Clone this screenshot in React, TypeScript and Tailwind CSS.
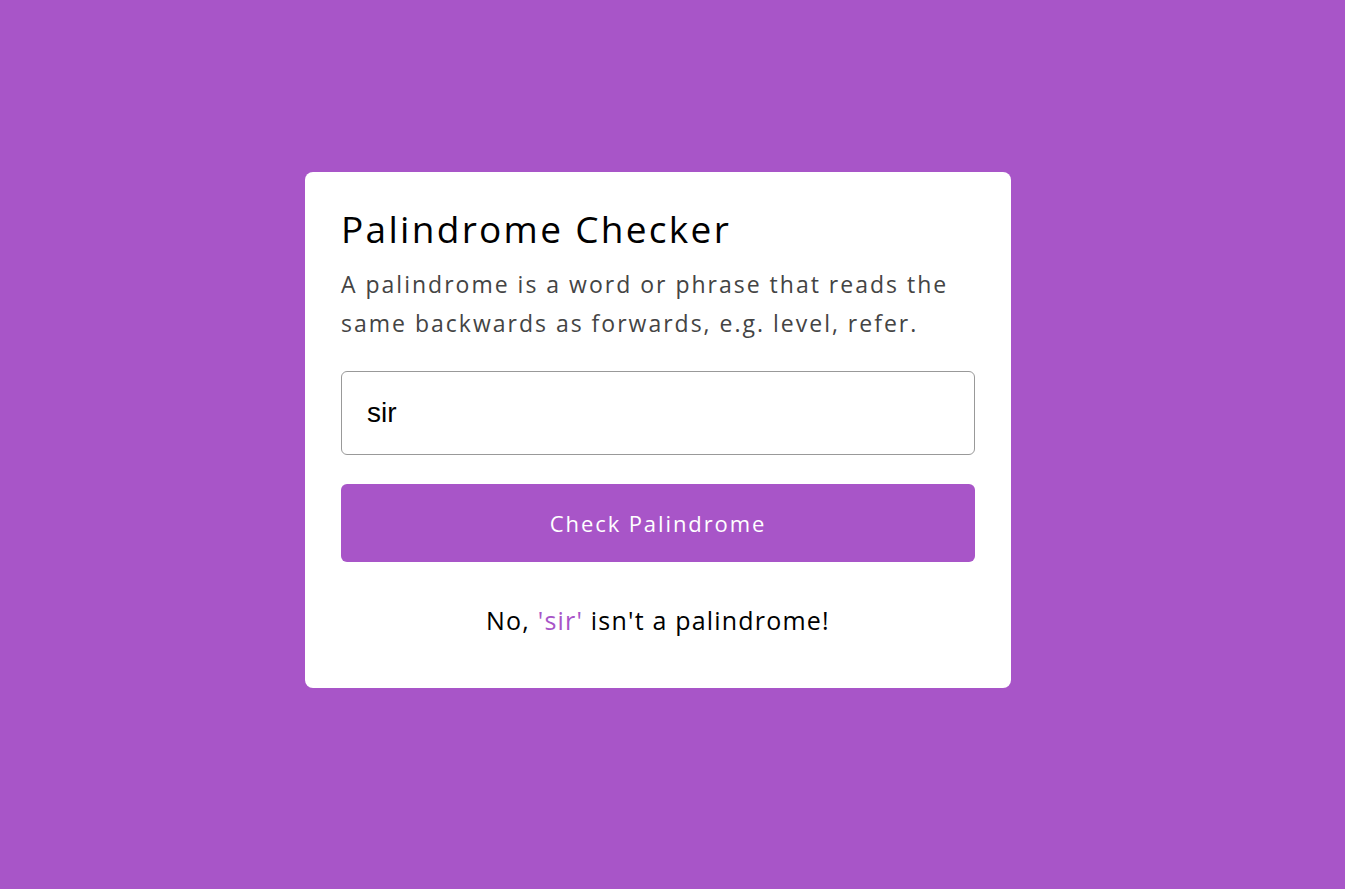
export default function App() {
  return (
    <div className="min-h-screen w-full bg-[#a855c8] pt-[172px] pl-[305px]" style={{ fontFamily: '"Open Sans", sans-serif' }}>
      <div className="w-[706px] rounded-lg bg-white px-9 pt-[30px] pb-[50px]">
        <h1 className="text-[37px] leading-[54px] tracking-[2.3px] text-black">Palindrome Checker</h1>
        <p className="mt-[9px] text-[23px] leading-[39px] tracking-[2px] text-[#444]">
          A palindrome is a word or phrase that reads the same backwards as forwards, e.g. level, refer.
        </p>
        <input
          defaultValue="sir"
          className="mt-[28px] block h-[84px] w-full rounded-md border border-[#999] px-[25px] text-[28px] text-black outline-none"
          style={{ fontFamily: '"Liberation Sans", Arial, sans-serif' }}
        />
        <button className="mt-[29px] block h-[78px] w-full rounded-md bg-[#a855c8] text-[22px] tracking-[1.9px] text-white">
          Check Palindrome
        </button>
        <p className="mt-[40px] text-center text-[25px] leading-[36px] tracking-[1.2px] text-black">
          No, <span className="text-[#a855c8]">'sir'</span> isn't a palindrome!
        </p>
      </div>
    </div>
  );
}
